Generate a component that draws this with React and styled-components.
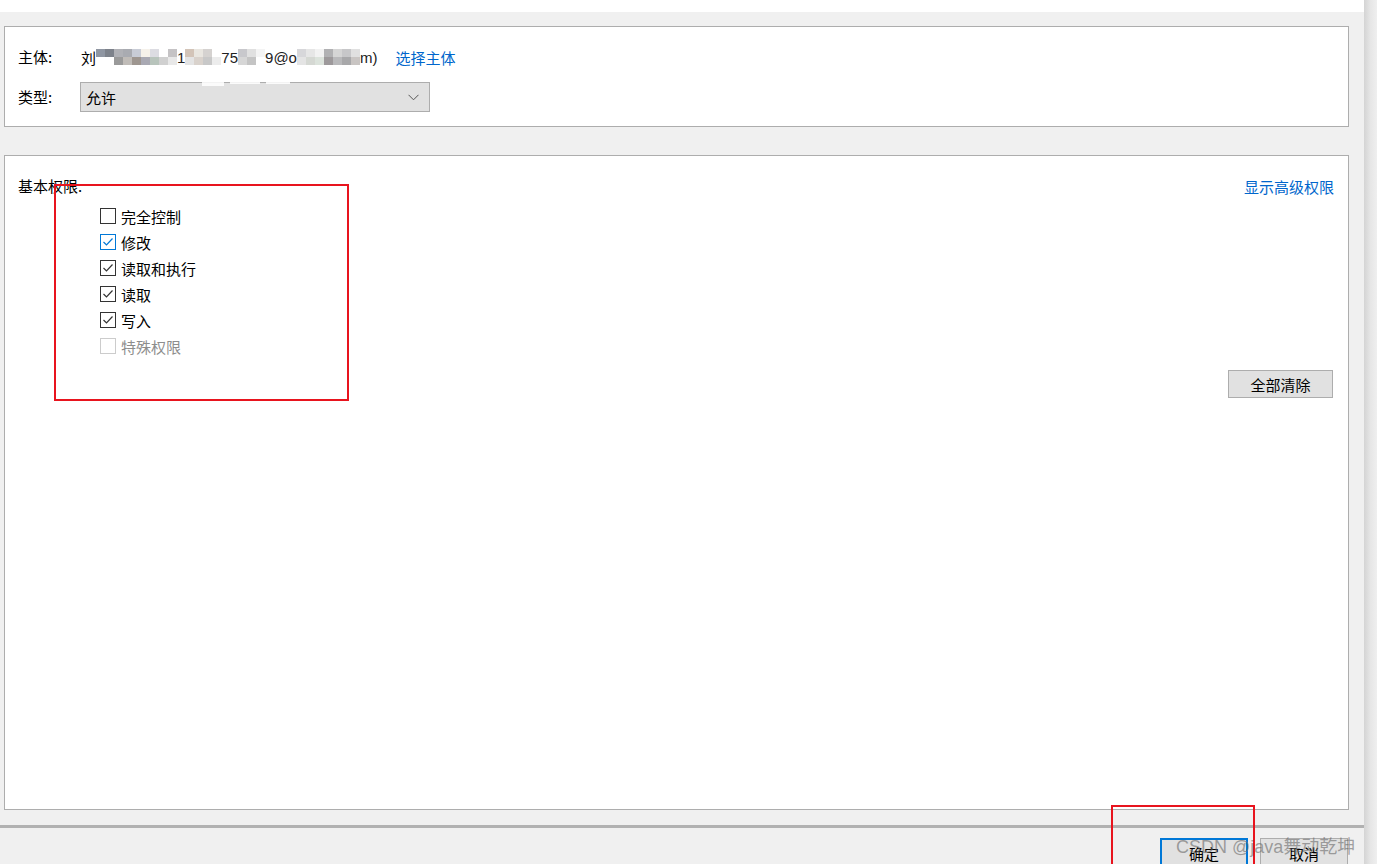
import React from "react";
import styled, { createGlobalStyle } from "styled-components";

const GlobalStyle = createGlobalStyle`
  html, body {
    margin: 0;
    padding: 0;
  }
  body {
    background: #f0f0f0;
    overflow: hidden;
    font-family: "Noto Sans CJK SC", "Microsoft YaHei", sans-serif;
    font-size: 15px;
    color: #000;
  }
`;

const Screen = styled.div`
  position: relative;
  display: flex;
  width: 1377px;
  height: 864px;
  overflow: hidden;
`;

const Dialog = styled.div`
  flex: 1;
  display: flex;
  flex-direction: column;
  background: #f0f0f0;
`;

const Gutter = styled.div`
  width: 13px;
  flex-shrink: 0;
  background: linear-gradient(to right, #d4d4d4, #e6e6e6 50%, #efefef);
`;

const TopStrip = styled.div`
  height: 12px;
  flex-shrink: 0;
  background: #fff;
`;

const Panel = styled.div`
  flex-shrink: 0;
  box-sizing: border-box;
  height: ${(p) => p.$h}px;
  margin: ${(p) => p.$top}px 15px 0 4px;
  padding: 18px 14px 0 13px;
  background: #fff;
  border: 1px solid #adadad;
`;

const FieldGrid = styled.div`
  display: grid;
  grid-template-columns: 62px auto;
  grid-template-rows: 24px 30px;
  row-gap: 13px;
  align-items: center;
`;

const Label = styled.span`
  line-height: 24px;
  white-space: nowrap;
`;

const ValueRow = styled.div`
  display: flex;
  align-items: center;
  padding-left: 1px;
  white-space: nowrap;
`;

const Link = styled.span`
  color: #0066cc;
  cursor: pointer;
  margin-left: ${(p) => p.$ml || 0}px;
  white-space: nowrap;
`;

const Mosaic = styled.div`
  display: flex;
  align-items: center;
  height: 24px;
`;

const BlockCol = styled.div`
  display: flex;
  flex-direction: column;
  width: ${(p) => p.$w || 9}px;
`;

const Cell = styled.div`
  height: 8px;
  background: ${(p) => p.$c};
`;

const Fragment = styled.span`
  color: #222;
  font-family: "Liberation Sans", Arial, sans-serif;
  font-size: 15px;
`;

const Select = styled.div`
  box-sizing: border-box;
  width: 350px;
  height: 30px;
  display: flex;
  align-items: center;
  justify-content: space-between;
  padding: 0 10px 0 5px;
  background: #e1e1e1;
  border: 1px solid #adadad;
`;

const Header = styled.div`
  display: flex;
  justify-content: space-between;
  align-items: center;
  height: 24px;
`;

const CheckList = styled.div`
  display: flex;
  flex-direction: column;
  margin: 5px 0 0 82px;
`;

const CheckRow = styled.label`
  display: flex;
  align-items: center;
  gap: 5px;
  height: 26px;
  color: ${(p) => (p.$disabled ? "#8d8d8d" : "#000")};
`;

const Box = styled.span`
  box-sizing: border-box;
  width: 16px;
  height: 16px;
  display: flex;
  align-items: center;
  justify-content: center;
  background: #fff;
  border: 1px solid ${(p) => p.$border};
`;

const ClearRow = styled.div`
  display: flex;
  justify-content: flex-end;
  margin-top: 11px;
`;

const Button = styled.button`
  box-sizing: border-box;
  width: ${(p) => p.$w}px;
  height: ${(p) => p.$h}px;
  margin-right: ${(p) => p.$mr || 0}px;
  padding: 0;
  background: #e1e1e1;
  border: ${(p) => (p.$primary ? "2px solid #0078d7" : "1px solid #adadad")};
  font-family: "Noto Sans CJK SC", sans-serif;
  font-size: 15px;
  color: #000;
`;

const Separator = styled.div`
  flex-shrink: 0;
  height: 3px;
  margin-top: 15px;
  background: #b1b1b1;
`;

const Footer = styled.div`
  display: flex;
  justify-content: flex-end;
  gap: 12px;
  padding: 10px 16px 0 0;
`;

const Annotation = styled.div`
  position: absolute;
  left: ${(p) => p.$x}px;
  top: ${(p) => p.$y}px;
  width: ${(p) => p.$w}px;
  height: ${(p) => p.$h}px;
  box-sizing: border-box;
  border: 2px solid #e8141e;
  pointer-events: none;
`;

const Smudge = styled.div`
  position: absolute;
  left: 202px;
  top: 72px;
  display: flex;
  gap: 6px;
  pointer-events: none;
`;

const SmudgeBlock = styled.div`
  width: ${(p) => p.$w}px;
  height: ${(p) => p.$h}px;
  background: rgba(255, 255, 255, 0.85);
  margin-top: ${(p) => p.$mt || 0}px;
`;

const Watermark = styled.div`
  position: absolute;
  left: 1176px;
  top: 832px;
  font-family: "Liberation Sans", "Noto Sans CJK SC", sans-serif;
  font-size: 18px;
  color: rgba(105, 105, 105, 0.6);
  white-space: nowrap;
  pointer-events: none;
`;

const Chevron = () => (
  <svg width="11" height="7" viewBox="0 0 11 7">
    <polyline points="0.5,0.8 5.5,5.8 10.5,0.8" fill="none" stroke="#555" strokeWidth="1" />
  </svg>
);

const Check = ({ color }) => (
  <svg width="12" height="10" viewBox="0 0 12 10">
    <polyline points="1.5,5 4.5,8 10.5,1.5" fill="none" stroke={color} strokeWidth="1.2" />
  </svg>
);

// blurred e-mail, roughly the colours of the pixelation
const seg1 = [
  ["#8f96a2", "#fff"], ["#7d828b", "#fff"], ["#b0b1b6", "#9a9a9a"], ["#a9abb1", "#c0bcb8"],
  ["#c8ccd6", "#9e9690"], ["#f5f1ea", "#a9a9b3"], ["#dcdce2", "#b8c4bc"], ["#fff", "#d0d0d0"],
  ["#c5c3c5", "#e8e8e8"],
];
const seg2 = [["#d3c4b8", "#e4e4e4"], ["#e9e6e0", "#d9d2cc"], ["#d5d2d0", "#c8c8c8"], ["#fff", "#ececec"]];
const seg3 = [["#c8c8cc", "#d6d6d6"], ["#e0e0e0", "#c4c4c4"], ["#f4f4f4", "#fff"]];
const seg4 = [
  ["#d7d7da", "#e4e4e4"], ["#e6e6e6", "#d5d8d3"], ["#f2f2f2", "#dce3dc"], ["#b1b1b3", "#9d999b"],
  ["#d5d5d5", "#b9b9bb"], ["#c7c7c9", "#a8a8aa"], ["#e0e0e0", "#c9c5c3"],
];

const Blocks = ({ cols }) =>
  cols.map(([a, b], i) => (
    <BlockCol key={i}>
      <Cell $c={a} />
      <Cell $c={b} />
    </BlockCol>
  ));

const permissions = [
  { name: "完全控制", checked: false },
  { name: "修改", checked: true, focus: true },
  { name: "读取和执行", checked: true },
  { name: "读取", checked: true },
  { name: "写入", checked: true },
  { name: "特殊权限", checked: false, disabled: true },
];

const boxBorder = (p) => {
  if (p.disabled) return "#cccccc";
  if (p.focus) return "#0078d7";
  return "#333333";
};

export default function App() {
  return (
    <>
      <GlobalStyle />
      <Screen>
        <Dialog>
          <TopStrip />
          <Panel $top={14} $h={101}>
            <FieldGrid>
              <Label>主体:</Label>
              <ValueRow>
                <span>刘</span>
                <Mosaic>
                  <Blocks cols={seg1} />
                  <Fragment>1</Fragment>
                  <Blocks cols={seg2} />
                  <Fragment>75</Fragment>
                  <Blocks cols={seg3} />
                  <Fragment>9@o</Fragment>
                  <Blocks cols={seg4} />
                  <Fragment>m)</Fragment>
                </Mosaic>
                <Link $ml={18}>选择主体</Link>
              </ValueRow>
              <Label>类型:</Label>
              <Select>
                <span>允许</span>
                <Chevron />
              </Select>
            </FieldGrid>
          </Panel>
          <Panel $top={28} $h={655}>
            <Header>
              <Label>基本权限:</Label>
              <Link>显示高级权限</Link>
            </Header>
            <CheckList>
              {permissions.map((p) => (
                <CheckRow key={p.name} $disabled={p.disabled}>
                  <Box $border={boxBorder(p)}>
                    {p.checked && <Check color={p.focus ? "#0078d7" : "#333"} />}
                  </Box>
                  {p.name}
                </CheckRow>
              ))}
            </CheckList>
            <ClearRow>
              <Button $w={105} $h={28} $mr={1}>
                全部清除
              </Button>
            </ClearRow>
          </Panel>
          <Separator />
          <Footer>
            <Button $w={88} $h={30} $primary>
              确定
            </Button>
            <Button $w={88} $h={30}>
              取消
            </Button>
          </Footer>
        </Dialog>
        <Gutter />
        <Smudge>
          <SmudgeBlock $w={22} $h={10} $mt={4} />
          <SmudgeBlock $w={30} $h={12} />
          <SmudgeBlock $w={24} $h={9} $mt={3} />
        </Smudge>
        <Annotation $x={54} $y={184} $w={295} $h={217} />
        <Annotation $x={1111} $y={805} $w={144} $h={70} />
        <Watermark>CSDN @java舞动乾坤</Watermark>
      </Screen>
    </>
  );
}
